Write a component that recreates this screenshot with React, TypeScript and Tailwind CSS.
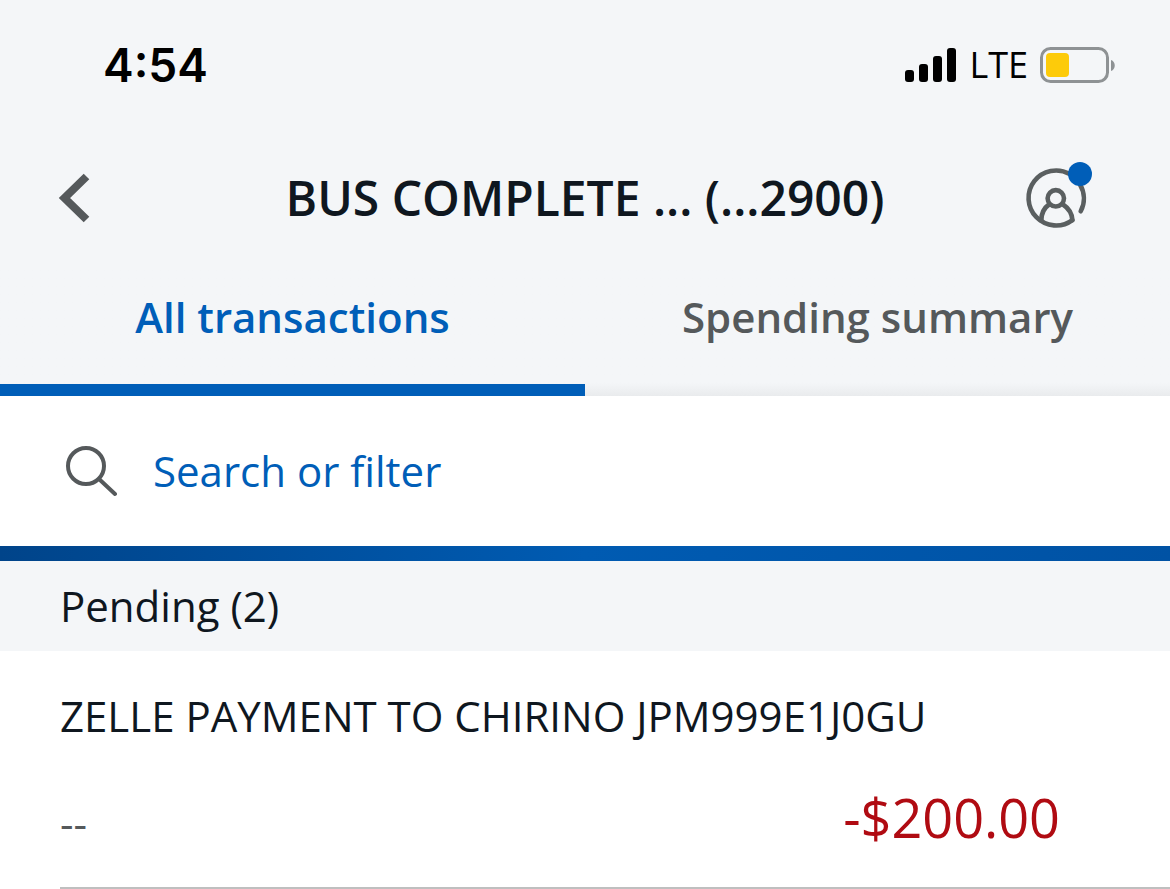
import { useState } from "react";
import clsx from "clsx";

type Transaction = {
  id: number;
  description: string;
  date: string;
  amount: string;
};

const tabs = ["All transactions", "Spending summary"];

const pending: Transaction[] = [
  { id: 1, description: "ZELLE PAYMENT TO CHIRINO JPM999E1J0GU", date: "--", amount: "-$200.00" },
];

function StatusBar() {
  return (
    <div className="flex h-[132px] items-center justify-between pr-[54px] pb-0.5 pl-[103px] text-black">
      <span className="font-['Inter',sans-serif] text-[46px] leading-[60px] font-semibold">4:54</span>
      <div className="flex items-center">
        {/* signal */}
        <svg width="52" height="34" viewBox="0 0 52 34" className="mr-3">
          <rect x="0" y="22" width="9" height="12" rx="3" />
          <rect x="14" y="16" width="9" height="18" rx="3" />
          <rect x="28" y="8" width="9" height="26" rx="3" />
          <rect x="42" y="0" width="9" height="34" rx="3" />
        </svg>
        <span className="mr-3 text-[36px] leading-[48px] font-medium">LTE</span>
        {/* battery */}
        <svg width="76" height="36" viewBox="0 0 76 36">
          <rect x="1.5" y="1.5" width="66" height="33" rx="9" fill="none" stroke="#8e9294" strokeWidth="3" />
          <rect x="6" y="6" width="23" height="24" rx="4" fill="#fdcb0a" />
          <path d="M71 13c5 1.500 5 9.500 0 11z" fill="#8e9294" />
        </svg>
      </div>
    </div>
  );
}

function Header() {
  return (
    <header className="flex h-[132px] items-center pr-[78px] pl-[58px]">
      <button aria-label="Back" className="w-[88px]">
        <svg width="34" height="50" viewBox="0 0 34 50" fill="none" stroke="#55595b" strokeWidth="8">
          <path d="M28.500 3.500 L6.500 25 L28.500 46.500" />
        </svg>
      </button>
      <h1 className="flex-1 text-center text-[48px] leading-[64px] font-semibold text-[#0f171f]">
        BUS COMPLETE ... (...2900)
      </h1>
      <button aria-label="Profile">
        <svg width="68" height="72" viewBox="0 0 68 72" fill="none" stroke="#5a5f60" strokeWidth="4.600" strokeLinecap="round" strokeLinejoin="round">
          <path d="M48.400 58.100 A27.500 27.500 0 1 1 45.700 12.100" />
          <path d="M56 22.500 A27.500 27.500 0 0 1 56.700 49.300" />
          <circle cx="31.800" cy="36.300" r="8.200" />
          <path d="M25 42.500 C20 46 17.300 51 17.300 58.500" />
          <path d="M39 42.500 C45 46.500 48 51 48.400 58.100" />
          <circle cx="56" cy="12" r="12" fill="#005eb8" stroke="none" />
        </svg>
      </button>
    </header>
  );
}

export default function App() {
  const [activeTab, setActiveTab] = useState(tabs[0]);
  const [query, setQuery] = useState("");

  return (
    <div className="bg-white font-['Open_Sans',sans-serif] text-[#0f171f]">
      <div className="bg-[#f4f6f8]">
        <StatusBar />
        <Header />

        {/* Tabs */}
        <nav className="grid grid-cols-2 bg-linear-to-t from-[#e9ebed] to-[#f4f6f8] to-10%">
          {tabs.map((tab) => (
            <button
              key={tab}
              onClick={() => setActiveTab(tab)}
              className={clsx(
                "h-[132px] border-b-12 pb-[14px] text-[42px] leading-[56px] font-semibold",
                activeTab === tab
                  ? "border-[#005eb8] text-[#005eb8]"
                  : "border-transparent text-[#55595b]"
              )}
            >
              {tab}
            </button>
          ))}
        </nav>
      </div>

      {/* Search */}
      <label className="flex h-[150px] items-center gap-9 px-[65px]">
        <svg width="52" height="52" viewBox="0 0 52 52" fill="none" stroke="#55595b" strokeWidth="4" strokeLinecap="round" className="shrink-0">
          <circle cx="21" cy="21" r="18" />
          <path d="M34 34 L50 49" />
        </svg>
        <input
          type="text"
          aria-label="Search or filter"
          placeholder="Search or filter"
          value={query}
          onChange={(e) => setQuery(e.target.value)}
          className="w-full bg-transparent text-[42px] leading-[56px] text-[#005eb8] outline-none placeholder:text-[#005eb8]"
        />
      </label>
      <div className="h-[15px] bg-linear-to-r from-[#00448a] via-[#005bb2] to-[#0052a4]" />

      {/* Pending */}
      <h2 className="bg-[#f4f6f8] px-[60px] py-[17px] text-[42px] leading-[56px]">Pending (2)</h2>
      <ul>
        {pending.map((item) => (
          <li key={item.id} className="ml-[60px] border-b-2 border-[#bfbfbf] pt-9 pb-[34px]">
            <p className="text-[42px] leading-[58px]">{item.description}</p>
            <div className="mt-9 flex items-end justify-between pr-[110px]">
              <span className="text-[42px] leading-[60px] text-[#55595b]">{item.date}</span>
              <span className="text-[54px] leading-[72px] text-[#b00b12]">{item.amount}</span>
            </div>
          </li>
        ))}
      </ul>
    </div>
  );
}
